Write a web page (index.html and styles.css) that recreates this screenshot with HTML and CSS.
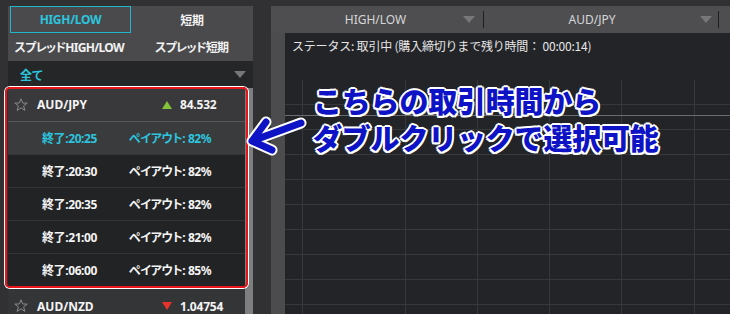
FILE: index.html
```html
<!DOCTYPE html>
<html lang="ja">
<head>
<meta charset="utf-8">
<title>HIGH/LOW</title>
<link rel="stylesheet" href="styles.css">
</head>
<body>
<div class="app">
  <aside class="left">
    <div class="tabs tabs-main">
      <div class="tab active">HIGH/LOW</div>
      <div class="tab">短期</div>
    </div>
    <div class="tabs tabs-sub">
      <div class="tab">スプレッドHIGH/LOW</div>
      <div class="tab">スプレッド短期</div>
    </div>
    <div class="select">
      <span class="select-label">全て</span>
      <span class="caret"></span>
    </div>
    <div class="listwrap">
      <div class="list">
        <div class="group">
          <div class="pair">
            <svg class="star" viewBox="0 0 14 14"><polygon points="7,0.8 8.7,5 13.2,5.1 9.6,7.9 10.9,12.4 7,9.8 3.1,12.4 4.4,7.9 0.8,5.1 5.3,5" fill="none" stroke="#8a8a8c" stroke-width="1"/></svg>
            <span class="pair-name">AUD/JPY</span>
            <span class="tri up"></span>
            <span class="price">84.532</span>
          </div>
          <div class="expiry selected"><span class="end">終了:20:25</span><span class="payout">ペイアウト: 82%</span></div>
          <div class="expiry"><span class="end">終了:20:30</span><span class="payout">ペイアウト: 82%</span></div>
          <div class="expiry"><span class="end">終了:20:35</span><span class="payout">ペイアウト: 82%</span></div>
          <div class="expiry"><span class="end">終了:21:00</span><span class="payout">ペイアウト: 82%</span></div>
          <div class="expiry last"><span class="end">終了:06:00</span><span class="payout">ペイアウト: 85%</span></div>
        </div>
        <div class="pair pair-next">
          <svg class="star" viewBox="0 0 14 14"><polygon points="7,0.8 8.7,5 13.2,5.1 9.6,7.9 10.9,12.4 7,9.8 3.1,12.4 4.4,7.9 0.8,5.1 5.3,5" fill="none" stroke="#8a8a8c" stroke-width="1"/></svg>
          <span class="pair-name">AUD/NZD</span>
          <span class="tri down"></span>
          <span class="price">1.04754</span>
        </div>
      </div>
      <div class="scroll"></div>
    </div>
  </aside>

  <main class="right">
    <div class="rhead">
      <div class="rsel rsel-1"><span class="rsel-label">HIGH/LOW</span><span class="caret"></span></div>
      <div class="sep"></div>
      <div class="rsel rsel-2"><span class="rsel-label">AUD/JPY</span><span class="caret"></span></div>
      <div class="sep"></div>
    </div>
    <div class="rbody">
      <div class="rside"></div>
      <div class="chart">
        <svg class="grid" viewBox="0 0 445 281" width="445" height="281">
          <g stroke="#36383b" stroke-width="1">
            <line x1="17.5" y1="47" x2="17.5" y2="281"/>
            <line x1="120.5" y1="47" x2="120.5" y2="281"/>
            <line x1="192.5" y1="47" x2="192.5" y2="281"/>
            <line x1="264.5" y1="47" x2="264.5" y2="281"/>
            <line x1="336.5" y1="47" x2="336.5" y2="281"/>
            <line x1="409.5" y1="47" x2="409.5" y2="281"/>
            <line x1="0" y1="71.5" x2="445" y2="71.5"/>
            <line x1="0" y1="96.5" x2="445" y2="96.5"/>
            <line x1="0" y1="121.5" x2="445" y2="121.5"/>
            <line x1="0" y1="146.5" x2="445" y2="146.5"/>
            <line x1="0" y1="171.5" x2="445" y2="171.5"/>
            <line x1="0" y1="196.5" x2="445" y2="196.5"/>
            <line x1="0" y1="221.5" x2="445" y2="221.5"/>
            <line x1="0" y1="246.5" x2="445" y2="246.5"/>
            <line x1="0" y1="271.5" x2="445" y2="271.5"/>
          </g>
          <line x1="0" y1="82.5" x2="445" y2="82.5" stroke="#6c6c6e" stroke-width="1"/>
        </svg>
        <div class="status">ステータス: 取引中 (購入締切りまで残り時間： 00:00:14)</div>
        <div class="note">
          <div class="note-line">こちらの取引時間から</div>
          <div class="note-line">ダブルクリックで選択可能</div>
        </div>
      </div>
    </div>
  </main>

  <svg class="arrow" viewBox="0 0 64 44" width="64" height="44">
    <g fill="none" stroke-linecap="round" stroke-linejoin="round">
      <path d="M57 10 L8 28 M22 9 L8 28 L28 37" stroke="#ffffff" stroke-width="11"/>
      <path d="M57 10 L8 28 M22 9 L8 28 L28 37" stroke="#0e14c6" stroke-width="7"/>
    </g>
  </svg>
</div>
</body>
</html>
```

FILE: styles.css
```css
* {
  box-sizing: border-box;
  margin: 0;
  padding: 0;
}

html,
body {
  background: #313133;
}

body {
  width: 730px;
  height: 314px;
  overflow: hidden;
  font-family: "Noto Sans", "Noto Sans CJK JP", sans-serif;
  color: #f0f0f0;
}

.app {
  position: relative;
  display: flex;
  gap: 18px;
  height: 314px;
  padding: 6px 0 0 8px;
}

/* ---------- left panel ---------- */
.left {
  width: 245px;
  flex: none;
  display: flex;
  flex-direction: column;
  font-feature-settings: "palt" 1;
}

.tabs {
  display: flex;
  background: #4a4a4c;
}

.tabs-main {
  height: 27px;
  padding-left: 2px;
}

.tabs-sub {
  height: 28px;
}

.tab {
  flex: 1;
  display: flex;
  align-items: center;
  justify-content: center;
  font-size: 12px;
  font-weight: 700;
  color: #f2f2f2;
  letter-spacing: -0.3px;
}

.tabs-sub .tab {
  letter-spacing: -0.7px;
}

.tab.active {
  flex: none;
  width: 121px;
  border: 1px solid #21b6cb;
  color: #2cc4de;
}

.select {
  height: 27px;
  flex: none;
  display: flex;
  align-items: center;
  justify-content: space-between;
  padding: 0 7px 0 12px;
  background: #252628;
  color: #2cc4de;
  font-size: 12px;
  font-weight: 700;
}

.caret {
  width: 0;
  height: 0;
  border-left: 6.5px solid transparent;
  border-right: 6.5px solid transparent;
  border-top: 7px solid #777779;
}

.listwrap {
  flex: 1;
  display: flex;
  min-height: 0;
}

.list {
  width: 237px;
  flex: none;
  display: flex;
  flex-direction: column;
  background: #2b2c2e;
}

.scroll {
  width: 8px;
  flex: none;
  background: #7e7e80;
}

.group {
  position: relative;
  flex: none;
  background: #222325;
}

.group::after {
  content: "";
  position: absolute;
  top: -1px;
  left: -3px;
  right: -3px;
  bottom: -2px;
  border: 2px solid #e8141c;
  border-radius: 5px;
  box-shadow: 0 0 0 1px #ffffff;
  pointer-events: none;
}

.pair {
  height: 34px;
  flex: none;
  display: flex;
  align-items: center;
  padding-left: 6px;
  background: #39393b;
  border-bottom: 1px solid #58585a;
  font-size: 12px;
  font-weight: 700;
  color: #f4f4f4;
}

.pair-next {
  margin-top: 3px;
  background: #343537;
  border-bottom: none;
}

.star {
  width: 14px;
  height: 14px;
  flex: none;
}

.pair-name {
  width: 125px;
  margin-left: 9px;
  flex: none;
}

.tri {
  width: 0;
  height: 0;
  flex: none;
  border-left: 5px solid transparent;
  border-right: 5px solid transparent;
}

.tri.up {
  border-bottom: 8px solid #84c23a;
}

.tri.down {
  border-top: 8px solid #e8332a;
}

.price {
  margin-left: 8px;
  letter-spacing: -0.2px;
}

.expiry {
  height: 33px;
  flex: none;
  display: flex;
  align-items: center;
  padding-left: 34px;
  border-bottom: 1px solid #343537;
  font-size: 12px;
  font-weight: 700;
  color: #f4f4f4;
  letter-spacing: -0.4px;
}

.expiry.last {
  border-bottom: none;
  height: 32px;
}

.expiry.selected {
  background: #3a3b3d;
  color: #2cc4de;
}

.end {
  width: 87px;
  flex: none;
}

/* ---------- right panel ---------- */
.right {
  width: 459px;
  flex: none;
  display: flex;
  flex-direction: column;
}

.rhead {
  height: 27px;
  flex: none;
  display: flex;
  align-items: center;
  background: #4e4e50;
}

.rsel {
  display: flex;
  align-items: center;
  height: 100%;
  font-size: 12px;
  color: #d6d6d8;
}

.rsel-label {
  flex: 1;
  text-align: center;
}

.rsel-1 {
  width: 212px;
  padding: 0 8px 0 17px;
}

.rsel-2 {
  width: 234px;
  padding-right: 6px;
}

.sep {
  width: 1px;
  height: 17px;
  background: #1e1e20;
  flex: none;
}

.rbody {
  flex: 1;
  display: flex;
  min-height: 0;
}

.rside {
  width: 14px;
  flex: none;
  background: #4c4c4e;
}

.chart {
  position: relative;
  flex: 1;
  background: #232427;
  overflow: hidden;
}

.grid {
  position: absolute;
  top: 0;
  left: 0;
  display: block;
}

.status {
  position: relative;
  padding: 5px 0 0 7px;
  font-family: "Noto Sans CJK JP", sans-serif;
  font-size: 12px;
  line-height: 16px;
  letter-spacing: -0.2px;
  color: #e6e6e8;
}

.note {
  position: absolute;
  left: 28px;
  top: 49px;
  font-family: "Noto Sans CJK JP", sans-serif;
  font-size: 29px;
  font-weight: 900;
  line-height: 37px;
  color: #0e14c6;
  letter-spacing: -0.2px;
  white-space: nowrap;
  text-shadow:
    2px 0 #fff, -2px 0 #fff, 0 2px #fff, 0 -2px #fff,
    1.5px 1.5px #fff, -1.5px 1.5px #fff, 1.5px -1.5px #fff, -1.5px -1.5px #fff;
}

.arrow {
  position: absolute;
  left: 244px;
  top: 113px;
}
```
